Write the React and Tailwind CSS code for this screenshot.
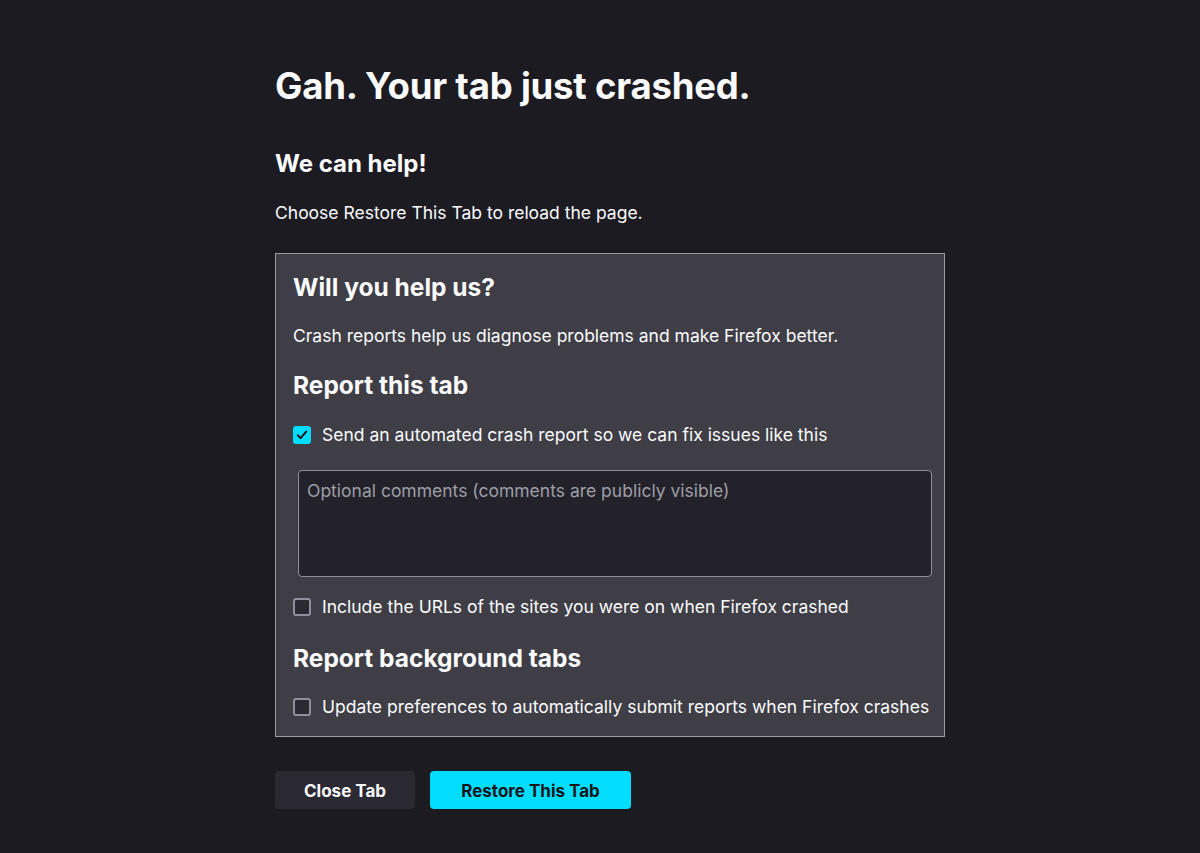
import React, { useState } from 'react';

const Checkbox = ({ checked, onChange, label }) => (
    <label className="flex items-center gap-[11px] h-6 cursor-pointer">
        <span
            onClick={onChange}
            className={
                checked
                    ? 'w-[18px] h-[18px] rounded-[3px] bg-[#00ddff] flex items-center justify-center shrink-0'
                    : 'w-[18px] h-[18px] rounded-[3px] bg-[#2b2a33] border-2 border-[#8f8f9d] shrink-0'
            }
        >
            {checked && (
                <svg width="12" height="12" viewBox="0 0 12 12" fill="none">
                    <path d="M1.8 6.3 4.6 9.1 10.2 2.6" stroke="#15141a" strokeWidth="2" strokeLinecap="round" strokeLinejoin="round" />
                </svg>
            )}
        </span>
        <span className="text-[17.5px] leading-6 text-[#fbfbfe] whitespace-nowrap">{label}</span>
    </label>
);

const App = () => {
    const [sendReport, setSendReport] = useState(true);
    const [includeUrls, setIncludeUrls] = useState(false);
    const [autoSubmit, setAutoSubmit] = useState(false);
    const [comments, setComments] = useState('');

    return (
        <div className="min-h-[853px] bg-[#1c1b22] text-[#fbfbfe] font-['Inter',sans-serif] antialiased">
            <div className="w-[670px] ml-[275px] pt-[64px]">
                <h1 className="text-[36.5px] leading-[44px] font-bold tracking-[-0.2px]">Gah. Your tab just crashed.</h1>
                <h2 className="mt-[42px] text-[24px] leading-7 font-bold">We can help!</h2>
                <p className="mt-[23px] text-[17.5px] leading-6">Choose Restore This Tab to reload the page.</p>

                <div className="mt-[28px] bg-[#3f3e46] border border-[#9a99a3] pl-[17px] pr-[12px] pt-[17px] pb-[17px]">
                    <h3 className="text-[24.5px] leading-8 font-bold">Will you help us?</h3>
                    <p className="mt-[21px] text-[17.5px] leading-6">Crash reports help us diagnose problems and make Firefox better.</p>
                    <h3 className="mt-[21px] text-[24.5px] leading-8 font-bold">Report this tab</h3>
                    <div className="mt-[22px]">
                        <Checkbox
                            checked={sendReport}
                            onChange={() => setSendReport(!sendReport)}
                            label="Send an automated crash report so we can fix issues like this"
                        />
                    </div>
                    <textarea
                        value={comments}
                        onChange={(e) => setComments(e.target.value)}
                        placeholder="Optional comments (comments are publicly visible)"
                        className="block mt-[23px] ml-[5px] w-[634px] h-[107px] bg-[#23222b] border border-[#8f8f9d] rounded-[4px] px-2 py-[8px] text-[17.5px] leading-6 text-[#fbfbfe] placeholder:text-[#9e9ea6] resize-none focus:outline-none"
                    />
                    <div className="mt-[18px]">
                        <Checkbox
                            checked={includeUrls}
                            onChange={() => setIncludeUrls(!includeUrls)}
                            label="Include the URLs of the sites you were on when Firefox crashed"
                        />
                    </div>
                    <h3 className="mt-[23px] text-[24.5px] leading-8 font-bold">Report background tabs</h3>
                    <div className="mt-[21px]">
                        <Checkbox
                            checked={autoSubmit}
                            onChange={() => setAutoSubmit(!autoSubmit)}
                            label="Update preferences to automatically submit reports when Firefox crashes"
                        />
                    </div>
                </div>

                <div className="mt-[34px] flex gap-[15px]">
                    <button className="h-[38px] w-[140px] pt-[3px] rounded-[4px] bg-[#2b2a33] text-[17px] font-bold text-[#fbfbfe]">
                        Close Tab
                    </button>
                    <button className="h-[38px] w-[201px] pt-[3px] rounded-[4px] bg-[#00ddff] text-[17px] font-bold text-[#15141a]">
                        Restore This Tab
                    </button>
                </div>
            </div>
        </div>
    );
};

export default App;
